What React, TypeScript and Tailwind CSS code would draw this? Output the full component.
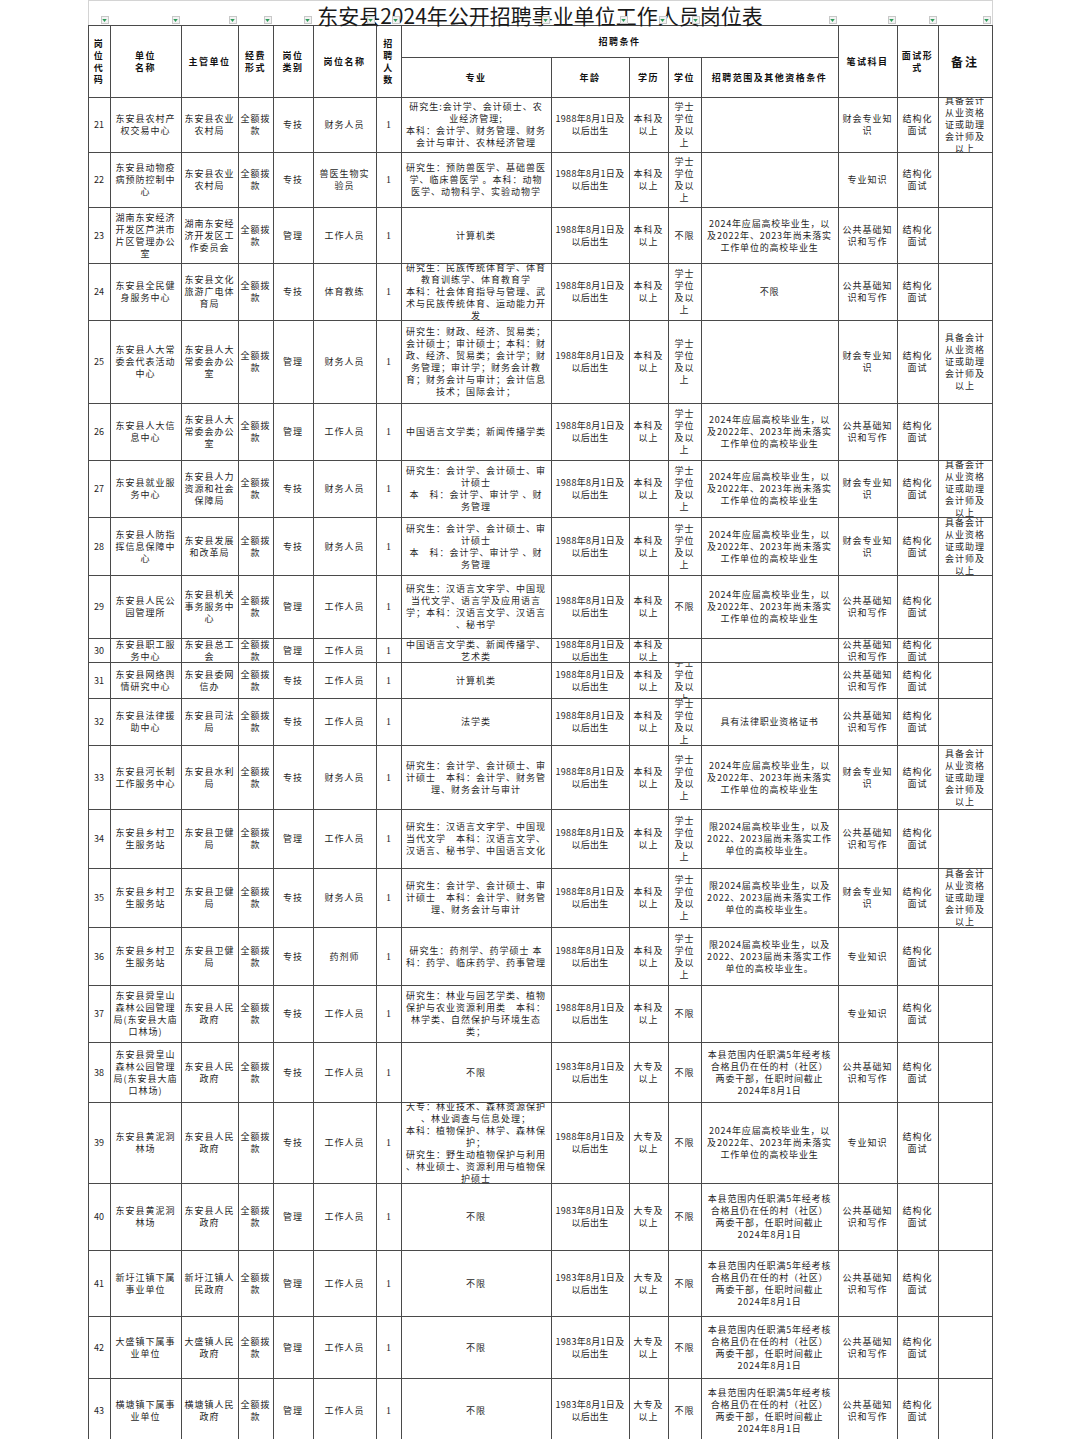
import React from "react";

// column widths = spreadsheet boundaries minus 1px grid line
const COLS =
  "grid-cols-[21px_70px_56px_34px_39px_62px_24px_149px_77px_38px_32px_136px_58px_40px_53px]";
const ROWS =
  "grid-rows-[31px_39px_54px_54px_55px_56px_82px_56px_56px_57px_62px_23px_35px_46px_63px_58px_58px_57px_56px_59px_80px_66px_65px_61px_63px]";

type Row = {
  code: string;
  unit: string;
  dept: string;
  type: string;
  post: string;
  major: string;
  age: string;
  edu: string;
  degree: string;
  scope: string;
  exam: string;
  interview: string;
  note: string;
};

const A88 = "1988年8月1日及\n以后出生";
const A83 = "1983年8月1日及\n以后出生";
const BK = "本科及\n以上";
const DZ = "大专及\n以上";
const XS = "学士\n学位\n及以\n上";
const S24 = "2024年应届高校毕业生，以\n及2022年、2023年尚未落实\n工作单位的高校毕业生";
const SX = "限2024届高校毕业生，以及\n2022、2023届尚未落实工作\n单位的高校毕业生。";
const SCUN = "本县范围内任职满5年经考核\n合格且仍在任的村（社区）\n两委干部，任职时间截止\n2024年8月1日";
const GG = "公共基础知\n识和写作";
const CK = "财会专业知\n识";
const ZY = "专业知识";
const MS = "结构化\n面试";
const NOTE = "具备会计\n从业资格\n证或助理\n会计师及\n以上";
const KJ = "研究生：会计学、会计硕士、审\n计硕士\n本　科：会计学、审计学 、财\n务管理";
const KJ2 = "研究生：会计学、会计硕士、审\n计硕士　本科：会计学、财务管\n理、财务会计与审计";
const SHL = "东安县舜皇山\n森林公园管理\n局(东安县大庙\n口林场)";

const ROWS_DATA: Row[] = [
  { code: "21", unit: "东安县农村产\n权交易中心", dept: "东安县农业\n农村局", type: "专技", post: "财务人员", major: "研究生:会计学、会计硕士、农\n业经济管理;\n本科：会计学、财务管理、财务\n会计与审计、农林经济管理", age: A88, edu: BK, degree: XS, scope: "", exam: CK, interview: MS, note: NOTE },
  { code: "22", unit: "东安县动物疫\n病预防控制中\n心", dept: "东安县农业\n农村局", type: "专技", post: "兽医生物实\n验员", major: "研究生：预防兽医学、基础兽医\n学、临床兽医学 。本科：动物\n医学、动物科学、实验动物学", age: A88, edu: BK, degree: XS, scope: "", exam: ZY, interview: MS, note: "" },
  { code: "23", unit: "湖南东安经济\n开发区芦洪市\n片区管理办公\n室", dept: "湖南东安经\n济开发区工\n作委员会", type: "管理", post: "工作人员", major: "计算机类", age: A88, edu: BK, degree: "不限", scope: S24, exam: GG, interview: MS, note: "" },
  { code: "24", unit: "东安县全民健\n身服务中心", dept: "东安县文化\n旅游广电体\n育局", type: "专技", post: "体育教练", major: "研究生：民族传统体育学、体育\n教育训练学、体育教育学\n本科：社会体育指导与管理、武\n术与民族传统体育、运动能力开\n发", age: A88, edu: BK, degree: XS, scope: "不限", exam: GG, interview: MS, note: "" },
  { code: "25", unit: "东安县人大常\n委会代表活动\n中心", dept: "东安县人大\n常委会办公\n室", type: "管理", post: "财务人员", major: "研究生：财政、经济、贸易类；\n会计硕士；审计硕士；本科：财\n政、经济、贸易类；会计学；财\n务管理；审计学；财务会计教\n育；财务会计与审计；会计信息\n技术；国际会计；", age: A88, edu: BK, degree: XS, scope: "", exam: CK, interview: MS, note: NOTE },
  { code: "26", unit: "东安县人大信\n息中心", dept: "东安县人大\n常委会办公\n室", type: "管理", post: "工作人员", major: "中国语言文学类；新闻传播学类", age: A88, edu: BK, degree: XS, scope: S24, exam: GG, interview: MS, note: "" },
  { code: "27", unit: "东安县就业服\n务中心", dept: "东安县人力\n资源和社会\n保障局", type: "专技", post: "财务人员", major: KJ, age: A88, edu: BK, degree: XS, scope: S24, exam: CK, interview: MS, note: NOTE },
  { code: "28", unit: "东安县人防指\n挥信息保障中\n心", dept: "东安县发展\n和改革局", type: "专技", post: "财务人员", major: KJ, age: A88, edu: BK, degree: XS, scope: S24, exam: CK, interview: MS, note: NOTE },
  { code: "29", unit: "东安县人民公\n园管理所", dept: "东安县机关\n事务服务中\n心", type: "管理", post: "工作人员", major: "研究生：汉语言文字学、中国现\n当代文学、语言学及应用语言\n学；本科：汉语言文学、汉语言\n、秘书学", age: A88, edu: BK, degree: "不限", scope: S24, exam: GG, interview: MS, note: "" },
  { code: "30", unit: "东安县职工服\n务中心", dept: "东安县总工\n会", type: "管理", post: "工作人员", major: "中国语言文学类、新闻传播学、\n艺术类", age: A88, edu: BK, degree: "", scope: "", exam: GG, interview: MS, note: "" },
  { code: "31", unit: "东安县网络舆\n情研究中心", dept: "东安县委网\n信办", type: "专技", post: "工作人员", major: "计算机类", age: A88, edu: BK, degree: XS, scope: "", exam: GG, interview: MS, note: "" },
  { code: "32", unit: "东安县法律援\n助中心", dept: "东安县司法\n局", type: "专技", post: "工作人员", major: "法学类", age: A88, edu: BK, degree: XS, scope: "具有法律职业资格证书", exam: GG, interview: MS, note: "" },
  { code: "33", unit: "东安县河长制\n工作服务中心", dept: "东安县水利\n局", type: "专技", post: "财务人员", major: KJ2, age: A88, edu: BK, degree: XS, scope: S24, exam: CK, interview: MS, note: NOTE },
  { code: "34", unit: "东安县乡村卫\n生服务站", dept: "东安县卫健\n局", type: "管理", post: "工作人员", major: "研究生：汉语言文字学、中国现\n当代文学　本科：汉语言文学、\n汉语言、秘书学、中国语言文化", age: A88, edu: BK, degree: XS, scope: SX, exam: GG, interview: MS, note: "" },
  { code: "35", unit: "东安县乡村卫\n生服务站", dept: "东安县卫健\n局", type: "专技", post: "财务人员", major: KJ2, age: A88, edu: BK, degree: XS, scope: SX, exam: CK, interview: MS, note: NOTE },
  { code: "36", unit: "东安县乡村卫\n生服务站", dept: "东安县卫健\n局", type: "专技", post: "药剂师", major: "研究生：药剂学、药学硕士 本\n科：药学、临床药学、药事管理", age: A88, edu: BK, degree: XS, scope: SX, exam: ZY, interview: MS, note: "" },
  { code: "37", unit: SHL, dept: "东安县人民\n政府", type: "专技", post: "工作人员", major: "研究生：林业与园艺学类、植物\n保护与农业资源利用类　本科：\n林学类、自然保护与环境生态\n类；", age: A88, edu: BK, degree: "不限", scope: "", exam: ZY, interview: MS, note: "" },
  { code: "38", unit: SHL, dept: "东安县人民\n政府", type: "专技", post: "工作人员", major: "不限", age: A83, edu: DZ, degree: "不限", scope: SCUN, exam: GG, interview: MS, note: "" },
  { code: "39", unit: "东安县黄泥洞\n林场", dept: "东安县人民\n政府", type: "专技", post: "工作人员", major: "大专：林业技术、森林资源保护\n、林业调查与信息处理；\n本科：植物保护、林学、森林保\n护；\n研究生：野生动植物保护与利用\n、林业硕士、资源利用与植物保\n护硕士", age: A88, edu: DZ, degree: "不限", scope: S24, exam: ZY, interview: MS, note: "" },
  { code: "40", unit: "东安县黄泥洞\n林场", dept: "东安县人民\n政府", type: "管理", post: "工作人员", major: "不限", age: A83, edu: DZ, degree: "不限", scope: SCUN, exam: GG, interview: MS, note: "" },
  { code: "41", unit: "新圩江镇下属\n事业单位", dept: "新圩江镇人\n民政府", type: "管理", post: "工作人员", major: "不限", age: A83, edu: DZ, degree: "不限", scope: SCUN, exam: GG, interview: MS, note: "" },
  { code: "42", unit: "大盛镇下属事\n业单位", dept: "大盛镇人民\n政府", type: "管理", post: "工作人员", major: "不限", age: A83, edu: DZ, degree: "不限", scope: SCUN, exam: GG, interview: MS, note: "" },
  { code: "43", unit: "横塘镇下属事\n业单位", dept: "横塘镇人民\n政府", type: "管理", post: "工作人员", major: "不限", age: A83, edu: DZ, degree: "不限", scope: SCUN, exam: GG, interview: MS, note: "" },
];

const CELL =
  "bg-white overflow-hidden flex items-center justify-center text-center whitespace-pre leading-[12px] text-[9px]";
const HEAD = `${CELL} font-bold tracking-[1.5px] text-[#111]`;

function FilterButton() {
  return (
    <div className="flex h-[8px] w-[8px] items-center justify-center border border-[#c8c8c8] bg-[#f3f3f3]">
      <svg viewBox="0 0 6 4" className="h-[3px] w-[5px]">
        <path d="M0 0h6L3 4z" fill="#2e9b5a" />
      </svg>
    </div>
  );
}

function DataRow({ r }: { r: Row }) {
  const body = `${CELL} tracking-[1px]`;
  return (
    <>
      <div className={`${CELL}`}>{r.code}</div>
      <div className={body}>{r.unit}</div>
      <div className={body}>{r.dept}</div>
      <div className={body}>全额拨{"\n"}款</div>
      <div className={body}>{r.type}</div>
      <div className={body}>{r.post}</div>
      <div className={`${CELL} font-['Liberation_Serif',serif] text-[10px]`}>1</div>
      <div className={body}>{r.major}</div>
      <div className={`${CELL} tracking-[0.3px]`}>{r.age}</div>
      <div className={body}>{r.edu}</div>
      <div className={body}>{r.degree}</div>
      <div className={`${CELL} tracking-[0.8px]`}>{r.scope}</div>
      <div className={body}>{r.exam}</div>
      <div className={body}>{r.interview}</div>
      <div className={body}>{r.note}</div>
    </>
  );
}

export default function App() {
  return (
    <div className="min-h-[1439px] bg-white font-['Noto_Sans_CJK_SC',sans-serif] text-[#1f1f1f]">
      <div className="mx-auto w-[905px]">
        {/* title row with spreadsheet filter buttons */}
        <div className="relative h-[25px] border-x border-t border-[#d4d4d4]">
          <h1 className="text-center text-[21px] leading-[28px] font-normal text-[#1a1a1a]">
            东安县2024年公开招聘事业单位工作人员岗位表
          </h1>
          <div className={`absolute inset-0 grid ${COLS} gap-x-px`}>
            {Array.from({ length: 15 }).map((_, i) => (
              <div key={i} className="flex items-end justify-end pb-[1px] pr-[1px]">
                <FilterButton />
              </div>
            ))}
          </div>
        </div>

        <div className={`grid ${COLS} ${ROWS} gap-px bg-[#4a4a4a] p-px`}>
          {/* header */}
          <div className={`${HEAD} row-span-2`}>岗{"\n"}位{"\n"}代{"\n"}码</div>
          <div className={`${HEAD} row-span-2`}>单位{"\n"}名称</div>
          <div className={`${HEAD} row-span-2`}>主管单位</div>
          <div className={`${HEAD} row-span-2`}>经费{"\n"}形式</div>
          <div className={`${HEAD} row-span-2`}>岗位{"\n"}类别</div>
          <div className={`${HEAD} row-span-2`}>岗位名称</div>
          <div className={`${HEAD} row-span-2`}>招{"\n"}聘{"\n"}人{"\n"}数</div>
          <div className={`${HEAD} col-span-5`}>招聘条件</div>
          <div className={`${HEAD} row-span-2`}>笔试科目</div>
          <div className={`${HEAD} row-span-2`}>面试形{"\n"}式</div>
          <div className={`${HEAD} row-span-2 text-[12px] tracking-[2px]`}>备注</div>
          <div className={HEAD}>专业</div>
          <div className={HEAD}>年龄</div>
          <div className={HEAD}>学历</div>
          <div className={HEAD}>学位</div>
          <div className={HEAD}>招聘范围及其他资格条件</div>

          {ROWS_DATA.map((r) => (
            <DataRow key={r.code} r={r} />
          ))}
        </div>
      </div>
    </div>
  );
}
